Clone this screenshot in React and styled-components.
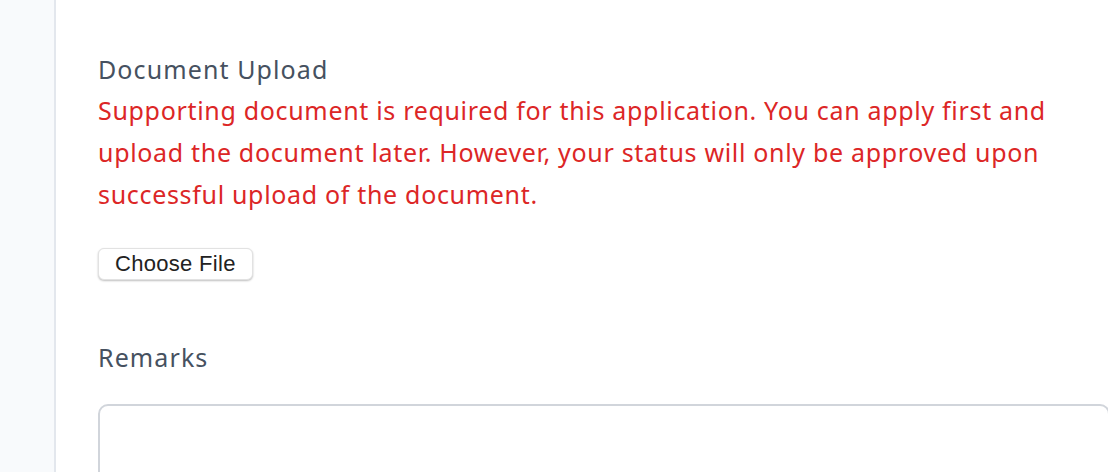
import React from 'react';
import styled, { createGlobalStyle } from 'styled-components';

const GlobalStyle = createGlobalStyle`
  html, body {
    margin: 0;
    padding: 0;
    background: #ffffff;
  }
  body {
    font-family: "Noto Sans", "Open Sans", sans-serif;
    overflow: hidden;
  }
`;

const Page = styled.div`
  display: flex;
  flex-direction: row;
  width: 1108px;
  height: 472px;
  overflow: hidden;
`;

const Sidebar = styled.aside`
  flex: 0 0 54px;
  background-color: #f8fafc;
  border-right: 2px solid #e3e7ed;
`;

const Content = styled.main`
  flex: 1;
  display: flex;
  flex-direction: column;
  padding: 49px 0 0 42px;
  min-width: 0;
`;

const Field = styled.section`
  display: flex;
  flex-direction: column;
  align-items: flex-start;
  margin-bottom: ${(p) => p.$gap || 0}px;
`;

const Label = styled.h2`
  margin: 0;
  font-size: 25px;
  font-weight: 400;
  letter-spacing: 1.1px;
  line-height: ${(p) => p.$lh || 40}px;
  color: #465160;
`;

const Warning = styled.p`
  margin: 0;
  font-size: 25px;
  line-height: 42px;
  letter-spacing: 0.68px;
  color: #dc2626;
  white-space: nowrap;
`;

const FileButton = styled.button`
  margin-top: 33px;
  height: 32px;
  padding: 0 16px;
  border-radius: 6px;
  border: 1px solid #e2e2e2;
  background: #ffffff;
  box-shadow: 0 1px 2px rgba(0, 0, 0, 0.25);
  font-family: "Liberation Sans", Arial, sans-serif;
  font-size: 22px;
  letter-spacing: 0.3px;
  color: #222222;
  cursor: pointer;
`;

const TextArea = styled.textarea`
  margin-top: 26px;
  width: 1012px;
  height: 120px;
  box-sizing: border-box;
  border: 2px solid #d1d5db;
  border-radius: 10px;
  resize: none;
  outline: none;
  font-family: inherit;
  font-size: 24px;
`;

export default function App() {
  return (
    <>
      <GlobalStyle />
      <Page>
        <Sidebar />
        <Content>
          <Field $gap={56}>
            <Label>Document Upload</Label>
            <Warning>
              Supporting document is required for this application. You can apply first and
              <br />
              upload the document later. However, your status will only be approved upon
              <br />
              successful upload of the document.
            </Warning>
            <FileButton type="button">Choose File</FileButton>
          </Field>
          <Field>
            <Label $lh={42}>Remarks</Label>
            <TextArea />
          </Field>
        </Content>
      </Page>
    </>
  );
}
